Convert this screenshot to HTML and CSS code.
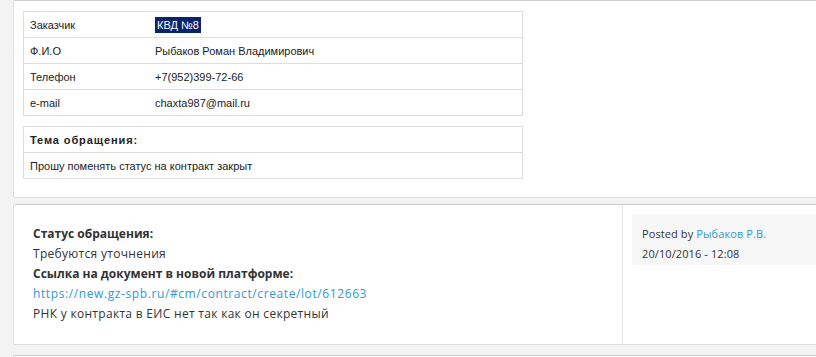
FILE: index.html
```html
<!DOCTYPE html>
<html lang="ru">
  <head>
    <meta charset="UTF-8" />
    <meta name="viewport" content="width=device-width, initial-scale=1.0" />
    <title>Обращение</title>
    <link rel="stylesheet" href="styles.css">
  </head>
  <body>
    <div class="page">
      <div class="card card-info">
        <div class="table">
          <div class="row">
            <div class="label">Заказчик</div>
            <div class="value"><span class="selected">КВД №8</span></div>
          </div>
          <div class="row">
            <div class="label">Ф.И.О</div>
            <div class="value">Рыбаков Роман Владимирович</div>
          </div>
          <div class="row">
            <div class="label">Телефон</div>
            <div class="value">+7(952)399-72-66</div>
          </div>
          <div class="row">
            <div class="label">e-mail</div>
            <div class="value">chaxta987@mail.ru</div>
          </div>
        </div>

        <div class="table">
          <div class="row">
            <div class="cell"><strong>Тема обращения:</strong></div>
          </div>
          <div class="row">
            <div class="cell">Прошу поменять статус на контракт закрыт</div>
          </div>
        </div>
      </div>

      <div class="card card-comment">
        <div class="comment-body">
          <p><strong>Статус обращения:</strong></p>
          <p>Требуются уточнения</p>
          <p><strong>Ссылка на документ в новой платформе:</strong></p>
          <p><a class="doc-link" href="#">https://new.gz-spb.ru/#cm/contract/create/lot/612663</a></p>
          <p>РНК у контракта в ЕИС нет так как он секретный</p>
        </div>
        <div class="comment-meta">
          <div class="meta-box">
            <p>Posted by <a href="#">Рыбаков Р.В.</a></p>
            <p>20/10/2016 - 12:08</p>
          </div>
        </div>
      </div>

      <div class="card card-next"></div>
    </div>
  </body>
</html>
```

FILE: styles.css
```css
body {
  margin: 0;
  padding: 0;
  background-color: #f3f3f3;
  font-family: "Open Sans", "Liberation Sans", sans-serif;
  color: #333;
  overflow: hidden;
}

.page {
  padding-left: 13px;
  border-left: 4px solid #f8f8f8;
  margin-left: -4px;
}

.card {
  background-color: #ffffff;
  border: 1px solid #dedede;
  border-top-color: #cccccc;
  border-radius: 2px 0 0 2px;
  border-right: none;
}

.card-info {
  height: 186px;
  padding: 10px 0 0 9px;
  margin-bottom: 6px;
}

.table {
  width: 498px;
  border: 1px solid #dddddd;
  margin-bottom: 10px;
  font-family: "Liberation Sans", Arial, sans-serif;
  font-size: 11px;
  color: #222;
}

.row {
  display: flex;
  height: 25px;
  align-items: center;
  border-bottom: 1px solid #dddddd;
}

.row:last-child {
  border-bottom: none;
}

.label {
  width: 125px;
  padding-left: 6px;
  box-sizing: border-box;
}

.value {
  padding-left: 6px;
}

.cell {
  padding-left: 6px;
}

.cell strong {
  letter-spacing: 0.9px;
}

.selected {
  background-color: #0a246a;
  color: #ffffff;
  padding: 2px 2px;
}

.card-comment {
  display: flex;
  height: 139px;
  margin-bottom: 10px;
}

.comment-body {
  width: 609px;
  box-sizing: border-box;
  padding: 19px 0 0 19px;
  border-right: 1px solid #e6e6e6;
  font-size: 12px;
  letter-spacing: 0.3px;
}

.comment-body strong {
  letter-spacing: 0;
}

.comment-body p,
.meta-box p {
  margin: 0;
  line-height: 20px;
}

a {
  color: #2e9ad0;
  text-decoration: none;
}

.doc-link {
  letter-spacing: 0.6px;
}

.comment-meta {
  flex: 1;
  padding: 9px 0 0 9px;
}

.meta-box {
  background-color: #f7f7f7;
  padding: 10px 0 1px 10px;
  font-size: 11px;
  letter-spacing: 0.1px;
}

.card-next {
  height: 1px;
  border-bottom: none;
}
```
